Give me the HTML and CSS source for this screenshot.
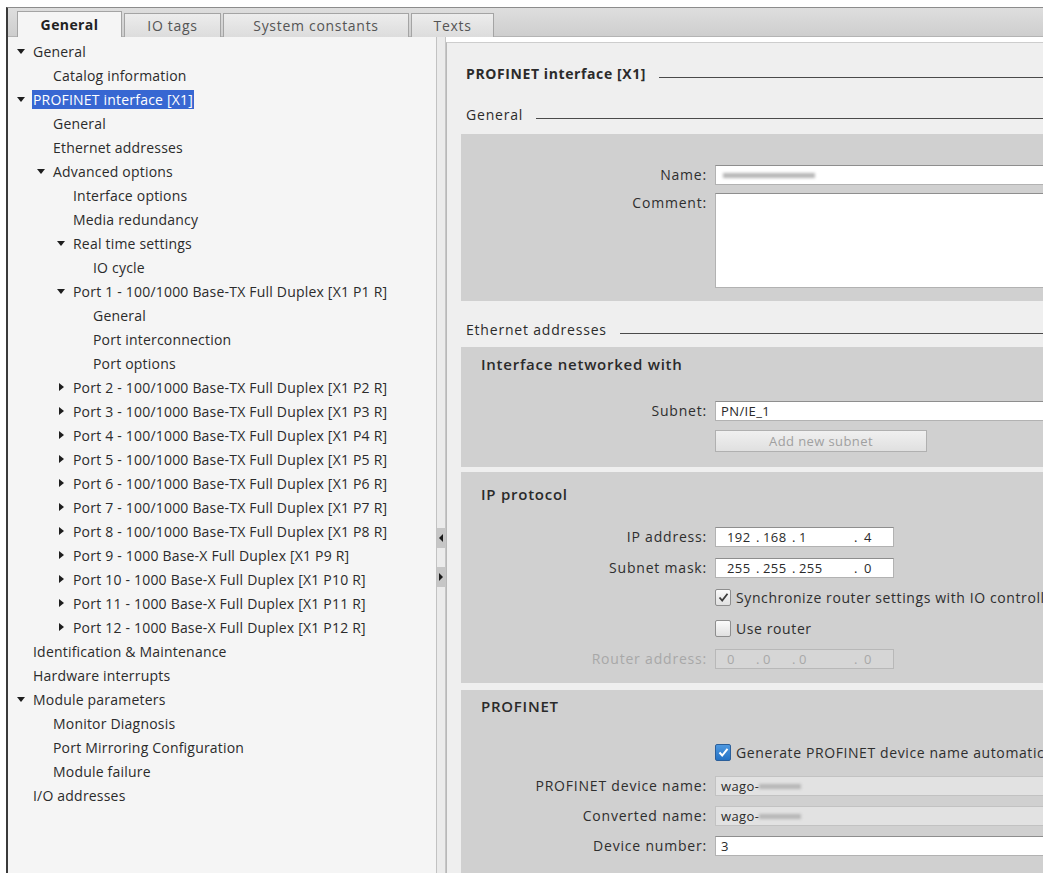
FILE: index.html
```html
<!DOCTYPE html>
<html lang="en">
<head>
    <meta charset="UTF-8">
    <title>PROFINET interface [X1] - Properties</title>
    <link rel="stylesheet" href="styles.css">
</head>
<body>
<div class="frame">
    <div class="tabbar">
        <div class="tab tab-general active">General</div>
        <div class="tab tab-tags">IO tags</div>
        <div class="tab tab-constants">System constants</div>
        <div class="tab tab-texts">Texts</div>
    </div>

    <div class="main">
        <!-- navigation tree -->
        <div class="tree">
            <div class="node l0 open"><i class="arrow"></i><span>General</span></div>
            <div class="node l1"><i class="arrow"></i><span>Catalog information</span></div>
            <div class="node l0 open"><i class="arrow"></i><span class="selected">PROFINET interface [X1]</span></div>
            <div class="node l1"><i class="arrow"></i><span>General</span></div>
            <div class="node l1"><i class="arrow"></i><span>Ethernet addresses</span></div>
            <div class="node l1 open"><i class="arrow"></i><span>Advanced options</span></div>
            <div class="node l2"><i class="arrow"></i><span>Interface options</span></div>
            <div class="node l2"><i class="arrow"></i><span>Media redundancy</span></div>
            <div class="node l2 open"><i class="arrow"></i><span>Real time settings</span></div>
            <div class="node l3"><i class="arrow"></i><span>IO cycle</span></div>
            <div class="node l2 open"><i class="arrow"></i><span>Port 1 - 100/1000 Base-TX Full Duplex [X1 P1 R]</span></div>
            <div class="node l3"><i class="arrow"></i><span>General</span></div>
            <div class="node l3"><i class="arrow"></i><span>Port interconnection</span></div>
            <div class="node l3"><i class="arrow"></i><span>Port options</span></div>
            <div class="node l2 closed"><i class="arrow"></i><span>Port 2 - 100/1000 Base-TX Full Duplex [X1 P2 R]</span></div>
            <div class="node l2 closed"><i class="arrow"></i><span>Port 3 - 100/1000 Base-TX Full Duplex [X1 P3 R]</span></div>
            <div class="node l2 closed"><i class="arrow"></i><span>Port 4 - 100/1000 Base-TX Full Duplex [X1 P4 R]</span></div>
            <div class="node l2 closed"><i class="arrow"></i><span>Port 5 - 100/1000 Base-TX Full Duplex [X1 P5 R]</span></div>
            <div class="node l2 closed"><i class="arrow"></i><span>Port 6 - 100/1000 Base-TX Full Duplex [X1 P6 R]</span></div>
            <div class="node l2 closed"><i class="arrow"></i><span>Port 7 - 100/1000 Base-TX Full Duplex [X1 P7 R]</span></div>
            <div class="node l2 closed"><i class="arrow"></i><span>Port 8 - 100/1000 Base-TX Full Duplex [X1 P8 R]</span></div>
            <div class="node l2 closed"><i class="arrow"></i><span>Port 9 - 1000 Base-X Full Duplex [X1 P9 R]</span></div>
            <div class="node l2 closed"><i class="arrow"></i><span>Port 10 - 1000 Base-X Full Duplex [X1 P10 R]</span></div>
            <div class="node l2 closed"><i class="arrow"></i><span>Port 11 - 1000 Base-X Full Duplex [X1 P11 R]</span></div>
            <div class="node l2 closed"><i class="arrow"></i><span>Port 12 - 1000 Base-X Full Duplex [X1 P12 R]</span></div>
            <div class="node l0"><i class="arrow"></i><span>Identification &amp; Maintenance</span></div>
            <div class="node l0"><i class="arrow"></i><span>Hardware interrupts</span></div>
            <div class="node l0 open"><i class="arrow"></i><span>Module parameters</span></div>
            <div class="node l1"><i class="arrow"></i><span>Monitor Diagnosis</span></div>
            <div class="node l1"><i class="arrow"></i><span>Port Mirroring Configuration</span></div>
            <div class="node l1"><i class="arrow"></i><span>Module failure</span></div>
            <div class="node l0"><i class="arrow"></i><span>I/O addresses</span></div>
        </div>

        <div class="splitter">
            <div class="handle"><i class="tri-left"></i></div>
            <div class="handle"><i class="tri-right"></i></div>
        </div>

        <!-- property pages -->
        <div class="props">
            <div class="section-head main-head"><span>PROFINET interface [X1]</span><div class="line"></div></div>

            <div class="section-head head-general"><span>General</span><div class="line"></div></div>
            <div class="box box-general">
                <div class="field">
                    <label>Name:</label>
                    <div class="input"><span class="redact wide"></span></div>
                </div>
                <div class="field top comment-row">
                    <label>Comment:</label>
                    <div class="input textarea"></div>
                </div>
            </div>

            <div class="section-head head-ethernet"><span>Ethernet addresses</span><div class="line"></div></div>
            <div class="box box-subnet">
                <div class="box-title">Interface networked with</div>
                <div class="field subnet-row">
                    <label>Subnet:</label>
                    <div class="input">PN/IE_1</div>
                </div>
                <div class="field button-row">
                    <label></label>
                    <div class="button">Add new subnet</div>
                </div>
            </div>

            <div class="box box-ip">
                <div class="box-title">IP protocol</div>
                <div class="field ip-first">
                    <label>IP address:</label>
                    <div class="input ip"><span class="oct">192</span><span class="dot">.</span><span class="oct">168</span><span class="dot">.</span><span class="oct wide">1</span><span class="dot">.</span><span class="last">4</span></div>
                </div>
                <div class="field">
                    <label>Subnet mask:</label>
                    <div class="input ip"><span class="oct">255</span><span class="dot">.</span><span class="oct">255</span><span class="dot">.</span><span class="oct wide">255</span><span class="dot">.</span><span class="last">0</span></div>
                </div>
                <div class="field sync-row">
                    <label></label>
                    <div class="checkrow">
                        <span class="check">
                            <svg width="13" height="13" viewBox="0 0 13 13"><path d="M2.5 6.5 L5.2 9.5 L10.5 2.8" fill="none" stroke="#3c3c3c" stroke-width="1.8"/></svg>
                        </span>
                        <span>Synchronize router settings with IO controller</span>
                    </div>
                </div>
                <div class="field">
                    <label></label>
                    <div class="checkrow">
                        <span class="check"></span>
                        <span>Use router</span>
                    </div>
                </div>
                <div class="field disabled">
                    <label>Router address:</label>
                    <div class="input ip"><span class="oct">0</span><span class="dot">.</span><span class="oct">0</span><span class="dot">.</span><span class="oct wide">0</span><span class="dot">.</span><span class="last">0</span></div>
                </div>
            </div>

            <div class="box box-profinet">
                <div class="box-title">PROFINET</div>
                <div class="field gen-row">
                    <label></label>
                    <div class="checkrow">
                        <span class="check blue">
                            <svg width="13" height="13" viewBox="0 0 13 13"><path d="M2.5 6.5 L5.2 9.5 L10.5 2.8" fill="none" stroke="#fff" stroke-width="2"/></svg>
                        </span>
                        <span>Generate PROFINET device name automatically</span>
                    </div>
                </div>
                <div class="field name-row">
                    <label>PROFINET device name:</label>
                    <div class="input readonly">wago-<span class="redact"></span></div>
                </div>
                <div class="field">
                    <label>Converted name:</label>
                    <div class="input readonly">wago-<span class="redact"></span></div>
                </div>
                <div class="field">
                    <label>Device number:</label>
                    <div class="input">3</div>
                </div>
            </div>
        </div>
    </div>
</div>
</body>
</html>
```

FILE: styles.css
```css
body {
    margin: 0;
    background: #fff;
    font-family: "Open Sans", "Liberation Sans", sans-serif;
    font-size: 14px;
    color: #333;
    overflow: hidden;
}
.frame {
    margin: 7px 0 0 6px;
    width: 1120px;
    height: 866px;
    border-left: 2px solid #3a3a3a;
    border-top: 1px solid #8c8c8c;
    display: flex;
    flex-direction: column;
}
.tabbar {
    height: 29px;
    box-sizing: border-box;
    background: linear-gradient(#dedede, #cecece);
    display: flex;
    align-items: flex-end;
    gap: 2px;
    padding-left: 9px;
    border-bottom: 1px solid #b4b4b4;
}
.tab {
    height: 24px;
    box-sizing: border-box;
    border: 1px solid #a4a4a4;
    border-bottom: none;
    background: linear-gradient(#ededed, #dcdcdc);
    font-size: 14px;
    letter-spacing: 0.7px;
    color: #555;
    display: flex;
    align-items: center;
    justify-content: center;
    margin-bottom: -1px;
}
.tab-general { width: 105px; }
.tab-tags { width: 97px; }
.tab-constants { width: 186px; }
.tab-texts { width: 83px; }
.tab.active {
    height: 26px;
    background: #f5f5f5;
    color: #222;
    font-weight: 700;
    letter-spacing: 0.4px;
}
.main {
    flex: 1;
    display: flex;
    min-height: 0;
}

/* tree */
.tree {
    width: 429px;
    box-sizing: border-box;
    background: #f5f5f5;
    border-right: 1px solid #c2c2c2;
    padding-top: 2px;
    letter-spacing: 0.2px;
}
.node {
    height: 24px;
    display: flex;
    align-items: center;
    white-space: nowrap;
    color: #2b2b2b;
}
.node.l0 { padding-left: 8px; }
.node.l1 { padding-left: 28px; }
.node.l2 { padding-left: 48px; }
.node.l3 { padding-left: 68px; }
.arrow {
    width: 17px;
    height: 8px;
    flex: none;
    position: relative;
}
.node.open .arrow::before {
    content: "";
    position: absolute;
    left: 1px;
    top: 2px;
    border-left: 4px solid transparent;
    border-right: 4px solid transparent;
    border-top: 5px solid #1e1e1e;
}
.node.closed .arrow::before {
    content: "";
    position: absolute;
    left: 3px;
    top: 0;
    border-top: 4px solid transparent;
    border-bottom: 4px solid transparent;
    border-left: 5px solid #1e1e1e;
}
.selected {
    background: #3767d2;
    color: #fff;
    padding: 0 1px 0 1px;
    margin-left: -1px;
    line-height: 19px;
}

/* splitter */
.splitter {
    width: 9px;
    flex: none;
    background: #ebebeb;
    border-right: 1px solid #c6c6c6;
    padding-top: 491px;
    box-sizing: border-box;
}
.handle {
    height: 20px;
    margin-bottom: 19px;
    background: #c6c6c6;
    display: flex;
    align-items: center;
    justify-content: center;
}
.tri-left {
    border-top: 4px solid transparent;
    border-bottom: 4px solid transparent;
    border-right: 4px solid #1a1a1a;
}
.tri-right {
    border-top: 4px solid transparent;
    border-bottom: 4px solid transparent;
    border-left: 4px solid #1a1a1a;
}

/* property pages */
.props {
    flex: 1;
    margin-top: 5px;
    border-left: 1px solid #b8b8b8;
    border-top: 1px solid #cdcdcd;
    background: #efefef;
    padding-left: 14px;
    letter-spacing: 0.8px;
}
.section-head {
    display: flex;
    align-items: center;
    height: 20px;
    gap: 13px;
    padding-left: 5px;
    white-space: nowrap;
    color: #2b2b2b;
}
.section-head .line {
    flex: 1;
    height: 1px;
    background: #4a4a4a;
    margin-top: 9px;
}
.main-head {
    margin-top: 20px;
    font-weight: 700;
    letter-spacing: 0.6px;
}
.head-general { margin-top: 21px; }
.head-ethernet { margin-top: 18px; }
.box {
    background: #d0d0d0;
}
.box-general {
    margin-top: 10px;
    padding: 31px 0 13px;
}
.box-subnet {
    margin-top: 8px;
    padding: 7px 0 15px;
}
.box-ip {
    margin-top: 5px;
    padding: 12px 0 14px;
}
.box-profinet {
    margin-top: 7px;
    padding: 6px 0 20px;
}
.box-title {
    height: 20px;
    line-height: 20px;
    padding-left: 20px;
    font-size: 15px;
    font-weight: 600;
    letter-spacing: 0.75px;
    color: #2a2a2a;
}
.field {
    display: grid;
    grid-template-columns: 246px 1fr;
    column-gap: 8px;
    align-items: center;
    margin-top: 11px;
}
.field label {
    text-align: right;
    white-space: nowrap;
    line-height: 20px;
    color: #2e2e2e;
}
.field.top { align-items: start; }
.box-general .field:first-child { margin-top: 0; }
.comment-row { margin-top: 8px; }
.subnet-row { margin-top: 27px; }
.button-row { margin-top: 9px; }
.ip-first { margin-top: 23px; }
.box-ip .field + .field { margin-top: 11px; }
.box-ip .field.sync-row { margin-top: 9px; }
.gen-row { margin-top: 26px; }
.box-profinet .field + .field { margin-top: 10px; }
.box-profinet .gen-row + .name-row { margin-top: 14px; }

.input {
    height: 20px;
    box-sizing: border-box;
    background: #fff;
    border: 1px solid #b2b2b2;
    border-top-color: #8e8e8e;
    padding: 0 5px;
    font-size: 13px;
    letter-spacing: 0.4px;
    white-space: nowrap;
    color: #2a2a2a;
    display: flex;
    align-items: center;
}
.textarea { height: 95px; }
.input.ip {
    width: 179px;
    padding-left: 11px;
}
.oct { width: 26px; }
.oct.wide { width: 52px; }
.dot {
    width: 10px;
    text-align: center;
}
.last { padding-left: 3px; }
.input.readonly {
    background: #e2e2e2;
    border-color: #c2c2c2;
}
.disabled label { color: #a8a8a8; }
.disabled .input {
    background: #d6d6d6;
    border-color: #b8b8b8;
    color: #a8a8a8;
}
.redact {
    display: inline-block;
    width: 42px;
    height: 5px;
    background: #b6b6b6;
    filter: blur(1.5px);
}
.redact.wide {
    width: 92px;
    margin-left: 2px;
}
.button {
    width: 212px;
    height: 22px;
    box-sizing: border-box;
    border: 1px solid #b0b0b0;
    background: linear-gradient(#f0f0f0, #e0e0e0);
    color: #a0a0a0;
    font-size: 13px;
    letter-spacing: 0.4px;
    display: flex;
    align-items: center;
    justify-content: center;
}
.checkrow {
    height: 20px;
    display: flex;
    align-items: center;
    gap: 5px;
    white-space: nowrap;
    color: #2e2e2e;
    letter-spacing: 0.6px;
}
.check {
    width: 16px;
    height: 17px;
    flex: none;
    box-sizing: border-box;
    border: 1px solid #8e8e8e;
    border-radius: 2px;
    background: linear-gradient(#fbfbfb, #e0e0e0);
    display: flex;
    align-items: center;
    justify-content: center;
}
.check.blue {
    background: linear-gradient(#4e98e0, #2472c4);
    border-color: #2b5f9a;
}
```
